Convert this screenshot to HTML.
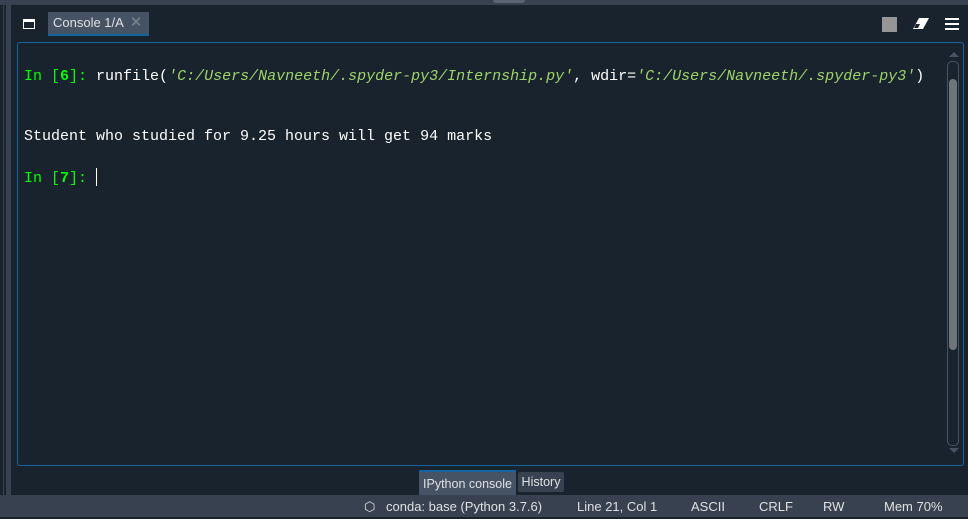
<!DOCTYPE html>
<html><head><style>
body{margin:0;width:968px;height:517px;background:#19232d;position:relative;overflow:hidden;font-family:"Liberation Sans",sans-serif}
div{position:absolute;box-sizing:border-box}
.mono{font-family:"Liberation Mono",monospace;font-size:15px;white-space:pre;color:#fff;left:24px}
.g{color:#00ff00}.gb{color:#00ff00;font-weight:bold}.s{color:#9ed36a;font-style:italic}
</style></head><body>
<div style="left:0;top:0;width:968px;height:5px;background:#37414f"></div>
<div style="left:493px;top:0;width:32px;height:3px;background:#5a6573;border-radius:0 0 3px 3px"></div>
<div style="left:3px;top:5px;width:1px;height:490px;background:#37414f"></div>
<div style="left:6px;top:5px;width:5px;height:490px;background:#37414f"></div>
<div style="left:23px;top:19px;width:12px;height:10px;border:1.5px solid #fff;border-top-width:3px"></div>
<div style="left:48px;top:12px;width:101px;height:24px;background:#455364;border-bottom:2px solid #1464a0;color:#e0e1e3;font-size:13px;line-height:22px;padding-left:5px">Console 1/A <span style="color:#7b8591;font-size:15px;margin-left:3px">✕</span></div>
<div style="left:882px;top:17px;width:15px;height:15px;background:#969696"></div>
<svg style="position:absolute;left:912px;top:17px" width="18" height="14"><polygon points="7,1 17,1 11,12 1,12" fill="#fff"/><polygon points="4,7 8,7 6,11 2,11" fill="#19232d"/></svg>
<div style="left:945px;top:18px;width:14px;height:2px;background:#fff;box-shadow:0 5px 0 #fff,0 10px 0 #fff"></div>
<div style="left:17px;top:42px;width:947px;height:424px;border:1px solid #1464a0;border-radius:3px"></div>
<div class="mono" style="top:68px"><span class="g">In [</span><span class="gb">6</span><span class="g">]:</span> runfile(<span class="s">'C:/Users/Navneeth/.spyder-py3/Internship.py'</span>, wdir=<span class="s">'C:/Users/Navneeth/.spyder-py3'</span>)</div>
<div class="mono" style="top:128px">Student who studied for 9.25 hours will get 94 marks</div>
<div class="mono" style="top:168px"><span class="g">In [</span><span class="gb">7</span><span class="g">]:</span> <span style="display:inline-block;width:1px;height:18px;background:#fff;vertical-align:-4px"></span></div>
<svg style="position:absolute;left:949px;top:51px" width="10" height="6"><polygon points="0,6 5,1 10,6" fill="#455364"/></svg>
<div style="left:947px;top:61px;width:12px;height:385px;border:1px solid #455364;border-radius:5px"></div>
<div style="left:949px;top:79px;width:8px;height:271px;background:#6f7478;border-radius:4px"></div>
<svg style="position:absolute;left:949px;top:448px" width="10" height="6"><polygon points="0,0 5,5 10,0" fill="#455364"/></svg>
<div style="left:419px;top:470px;width:97px;height:25px;background:#455364;border-top:2px solid #1464a0;color:#e0e1e3;font-size:12.5px;line-height:25px;text-align:center">IPython console</div>
<div style="left:518px;top:472px;width:46px;height:20px;background:#37414f;color:#e0e1e3;font-size:12.5px;line-height:20px;text-align:center;border-radius:2px">History</div>
<div style="left:0;top:495px;width:968px;height:22px;background:#37414f;color:#e0e1e3;font-size:13px;line-height:24px">
<span style="position:absolute;left:364px">⬡</span>
<span style="position:absolute;left:386px">conda: base (Python 3.7.6)</span>
<span style="position:absolute;left:577px">Line 21, Col 1</span>
<span style="position:absolute;left:691px">ASCII</span>
<span style="position:absolute;left:759px">CRLF</span>
<span style="position:absolute;left:823px">RW</span>
<span style="position:absolute;left:884px">Mem 70%</span>
</div>
</body></html>
